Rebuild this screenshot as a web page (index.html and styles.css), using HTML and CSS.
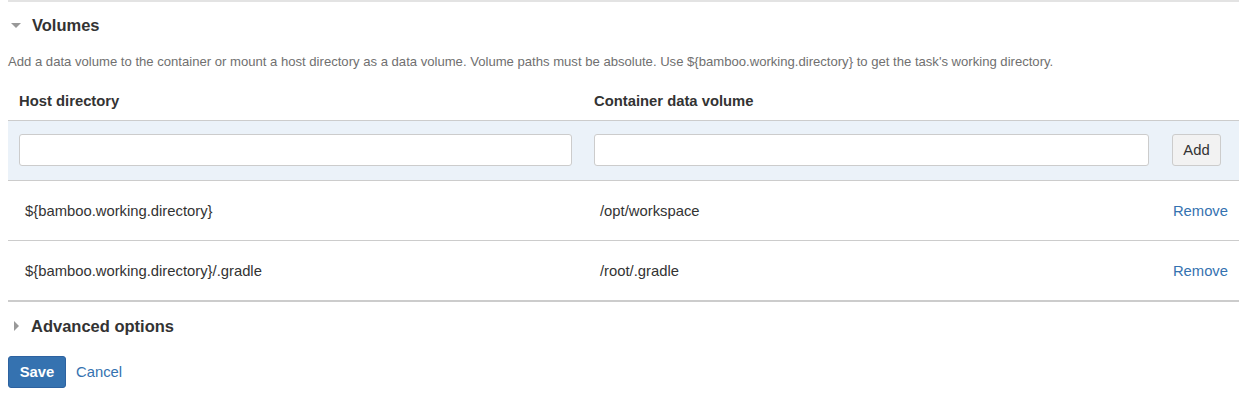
FILE: index.html
```html
<!DOCTYPE html>
<html lang="en">
<head>
  <meta charset="UTF-8" />
  <title>Volumes</title>
  <link rel="stylesheet" href="styles.css">
</head>
<body>
  <div class="page">
    <div class="section">
      <h3 class="toggle-title"><span class="twixie down"></span>Volumes</h3>
      <p class="description">Add a data volume to the container or mount a host directory as a data volume. Volume paths must be absolute. Use ${bamboo.working.directory} to get the task's working directory.</p>

      <table class="volumes">
        <thead>
          <tr>
            <th class="col-host">Host directory</th>
            <th class="col-container">Container data volume</th>
            <th class="col-actions"></th>
          </tr>
        </thead>
        <tbody>
          <tr class="create-row">
            <td><input type="text" class="text"></td>
            <td><input type="text" class="text"></td>
            <td class="add-cell"><button class="aui-button">Add</button></td>
          </tr>
          <tr class="item">
            <td><span class="value">${bamboo.working.directory}</span></td>
            <td><span class="value">/opt/workspace</span></td>
            <td class="actions"><a href="#">Remove</a></td>
          </tr>
          <tr class="item last">
            <td><span class="value">${bamboo.working.directory}/.gradle</span></td>
            <td><span class="value">/root/.gradle</span></td>
            <td class="actions"><a href="#">Remove</a></td>
          </tr>
        </tbody>
      </table>
    </div>

    <h3 class="toggle-title advanced"><span class="twixie right"></span>Advanced options</h3>

    <div class="buttons">
      <button class="aui-button primary">Save</button>
      <a href="#" class="cancel">Cancel</a>
    </div>
  </div>
</body>
</html>
```

FILE: styles.css
```css
body {
  font-family: "Liberation Sans", Arial, sans-serif;
  font-size: 14.8px;
  color: #333;
  margin: 0;
  padding: 0;
  background: #fff;
}

.page {
  margin: 0 12px 0 8px;
}

.section {
  border-top: 2px solid #e3e3e3;
}

.toggle-title {
  display: flex;
  align-items: center;
  margin: 0;
  height: 46px;
  font-size: 16.5px;
  font-weight: bold;
  color: #333;
}

.twixie {
  display: inline-block;
  width: 0;
  height: 0;
  margin-right: 11px;
}

.twixie.down {
  margin-left: 3px;
  border-left: 5px solid transparent;
  border-right: 5px solid transparent;
  border-top: 5px solid #999;
}

.twixie.right {
  margin-left: 6px;
  margin-right: 12px;
  border-top: 5px solid transparent;
  border-bottom: 5px solid transparent;
  border-left: 5px solid #999;
}

.description {
  margin: 6px 0 0;
  font-size: 13.1px;
  color: #707070;
  line-height: 16px;
}

.volumes {
  width: 100%;
  table-layout: fixed;
  border-collapse: collapse;
  margin-top: 10px;
  border-bottom: 2px solid #ccc;
}

.volumes th {
  text-align: left;
  font-weight: bold;
  padding: 0 11px 11px;
  height: 29px;
  vertical-align: bottom;
}

.col-host {
  width: 553px;
}

.col-container {
  width: 555px;
}

.volumes td {
  padding: 0 11px;
  height: 59px;
  vertical-align: middle;
}

.create-row td {
  background: #ebf2f9;
  border-top: 1px solid #ccc;
  border-bottom: 1px solid #ccc;
  vertical-align: top;
  padding-top: 13px;
  height: 46px;
}

.create-row .add-cell {
  padding-left: 12px;
}

.item td {
  border-bottom: 1px solid #ccc;
}

.item.last td {
  border-bottom: none;
}

.value {
  padding-left: 6px;
}

input.text {
  display: block;
  box-sizing: border-box;
  width: 100%;
  height: 32px;
  margin: 0;
  border: 1px solid #ccc;
  border-radius: 3px;
  background: #fff;
  font-family: inherit;
  font-size: 14px;
  padding: 4px 5px;
}

.aui-button {
  box-sizing: border-box;
  height: 32px;
  margin: 0;
  padding: 0 10px;
  border: 1px solid #ccc;
  border-radius: 3px;
  background: #f2f2f2;
  color: #333;
  font-family: inherit;
  font-size: 14.8px;
  cursor: pointer;
}

.add-cell .aui-button {
  width: 49px;
}

.aui-button.primary {
  background: #3572b0;
  border-color: #2d62a0;
  color: #fff;
  font-weight: bold;
  width: 58px;
}

.actions {
  text-align: right;
}

a {
  color: #3572b0;
  text-decoration: none;
}

.advanced {
  height: 48px;
}

.buttons {
  display: flex;
  align-items: center;
  gap: 10px;
  margin-top: 6px;
}
```
